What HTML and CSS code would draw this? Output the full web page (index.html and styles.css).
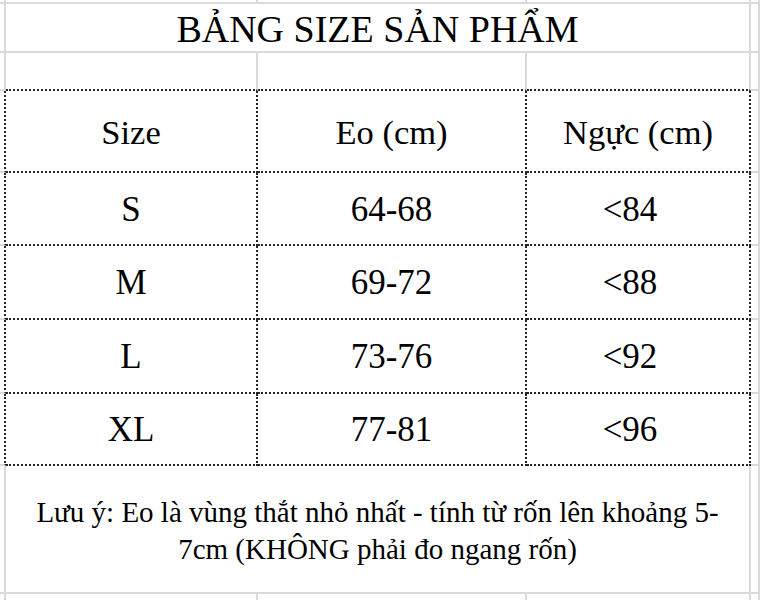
FILE: index.html
```html
<!DOCTYPE html>
<html lang="vi">
<head>
<meta charset="utf-8">
<title>Bảng size sản phẩm</title>
<link rel="stylesheet" href="styles.css">
</head>
<body>
<div class="sheet">
  <!-- row 0 -->
  <div class="c r0"></div><div class="c r0"></div><div class="c r0"></div><div class="c r0"></div><div class="c r0"></div>
  <!-- title row -->
  <div class="c"></div>
  <div class="c title span3">BẢNG SIZE SẢN PHẨM</div>
  <div class="c"></div>
  <!-- blank row -->
  <div class="c"></div><div class="c above"></div><div class="c above"></div><div class="c above"></div><div class="c"></div>
  <!-- header -->
  <div class="c lead"></div>
  <div class="c t head">Size</div>
  <div class="c t head">Eo (cm)</div>
  <div class="c t head">Ngực (cm)</div>
  <div class="c"></div>
  <!-- S -->
  <div class="c lead"></div>
  <div class="c t">S</div>
  <div class="c t">64-68</div>
  <div class="c t lt">&lt;84</div>
  <div class="c"></div>
  <!-- M -->
  <div class="c lead"></div>
  <div class="c t">M</div>
  <div class="c t">69-72</div>
  <div class="c t lt">&lt;88</div>
  <div class="c"></div>
  <!-- L -->
  <div class="c lead"></div>
  <div class="c t">L</div>
  <div class="c t">73-76</div>
  <div class="c t lt">&lt;92</div>
  <div class="c"></div>
  <!-- XL -->
  <div class="c lead"></div>
  <div class="c t">XL</div>
  <div class="c t">77-81</div>
  <div class="c t lt">&lt;96</div>
  <div class="c"></div>
  <!-- note -->
  <div class="c"></div>
  <div class="c note span3">Lưu ý: Eo là vùng thắt nhỏ nhất - tính từ rốn lên khoảng 5-<br>7cm (KHÔNG phải đo ngang rốn)</div>
  <div class="c"></div>
  <!-- last row -->
  <div class="c"></div><div class="c"></div><div class="c"></div><div class="c"></div><div class="c"></div>
</div>
</body>
</html>
```
FILE: styles.css
```css
html, body {
  margin: 0;
  padding: 0;
  background: #ffffff;
}

.sheet {
  width: 760px;
  height: 600px;
  overflow: hidden;
  display: grid;
  grid-template-columns: 6px 252px 269px 224px 1fr;
  grid-template-rows: 4px 49px 38px 82px 73px 74px 74px 72px 128px 40px;
  font-family: "Liberation Serif", "Times New Roman", serif;
  color: #000;
}

.c {
  box-sizing: border-box;
  border-right: 2px solid #dadada;
  border-bottom: 2px solid #dadada;
  min-width: 0;
}

.span3 {
  grid-column: span 3;
}

.title {
  font-size: 38px;
  display: flex;
  align-items: center;
  justify-content: center;
  padding-top: 2px;
}

.above {
  border-bottom: 2px dotted #262626;
}

.lead {
  border-right: 2px dotted #262626;
}

.t {
  border-right: 2px dotted #262626;
  border-bottom: 2px dotted #262626;
  display: flex;
  align-items: center;
  justify-content: center;
  font-size: 35px;
  padding-top: 2px;
}

.head {
  font-size: 34.5px;
}

.lt {
  padding-right: 16px;
}

.note {
  display: flex;
  align-items: center;
  justify-content: center;
  text-align: center;
  font-size: 29px;
  line-height: 37px;
  padding-top: 4px;
}
```
